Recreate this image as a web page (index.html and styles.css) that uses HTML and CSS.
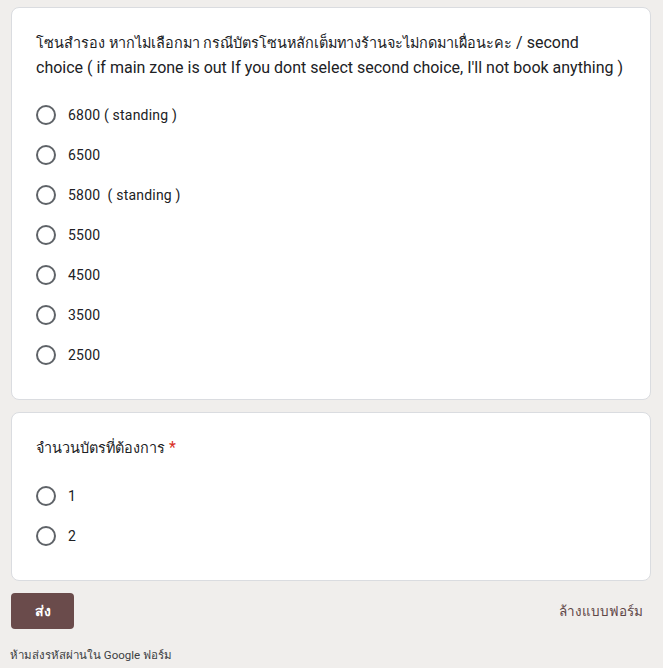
FILE: index.html
```html
<!DOCTYPE html>
<html lang="th">
<head>
  <meta charset="UTF-8"/>
  <meta name="viewport" content="width=device-width,initial-scale=1.0"/>
  <title>Google Forms</title>
  <link rel="stylesheet" href="styles.css">
</head>
<body>

<main class="form">
  <section class="card">
    <div class="q-title"><span class="th">โซนสำรอง หากไม่เลือกมา กรณีบัตรโซนหลักเต็มทางร้านจะไม่กดมาเผื่อนะคะ</span> / second choice ( if main zone is out If you dont select second choice, I'll not book anything )</div>
    <ul class="options">
      <li><span class="radio"></span>6800 ( standing )</li>
      <li><span class="radio"></span>6500</li>
      <li><span class="radio"></span>5800&nbsp; ( standing )</li>
      <li><span class="radio"></span>5500</li>
      <li><span class="radio"></span>4500</li>
      <li><span class="radio"></span>3500</li>
      <li><span class="radio"></span>2500</li>
    </ul>
  </section>

  <section class="card">
    <div class="q-title"><span class="th">จำนวนบัตรที่ต้องการ</span> <span class="req">*</span></div>
    <ul class="options">
      <li><span class="radio"></span>1</li>
      <li><span class="radio"></span>2</li>
    </ul>
  </section>

  <div class="actions">
    <button class="submit">ส่ง</button>
    <a class="clear" href="#">ล้างแบบฟอร์ม</a>
  </div>

  <p class="note">ห้ามส่งรหัสผ่านใน Google ฟอร์ม</p>
</main>

</body>
</html>
```

FILE: styles.css
```css
/* ========== Base ========== */
* { margin:0; padding:0; box-sizing:border-box }
body { font-family:Roboto,Arial,sans-serif; background:#f0eeec; color:#202124 }

.form { padding:7px 12px 0 11px }

/* ========== Cards ========== */
.card {
  background:#fff;
  border:1px solid #dadce0;
  border-radius:8px;
  padding:23px 24px 24px;
  margin-bottom:12px;
}

.q-title {
  font-size:16px;
  line-height:24px;
  padding-bottom:15px;
}
.q-title .th { font-size:14.4px }   /* thai fallback font runs wide */
.req { color:#d93025 }

.options { list-style:none }
.options li {
  display:flex;
  align-items:center;
  gap:12px;
  height:40px;
  font-size:14px;
  letter-spacing:0.2px;
}
.radio {
  width:20px;
  height:20px;
  border:2px solid #5f6368;
  border-radius:50%;
  flex-shrink:0;
}

/* ========== Actions ========== */
.actions {
  display:flex;
  justify-content:space-between;
  align-items:center;
}
.submit {
  width:63px;
  height:36px;
  border:none;
  border-radius:4px;
  background:#6a4b4b;
  color:#fff;
  font-family:inherit;
  font-size:14px;
  font-weight:bold;
}
.clear {
  color:#5e4646;
  text-decoration:none;
  font-size:13.5px;
  font-weight:500;
  padding-right:8px;
}

.note {
  font-size:11.5px;
  color:#3c4043;
  margin:17px 0 0 -1px;
}
```
